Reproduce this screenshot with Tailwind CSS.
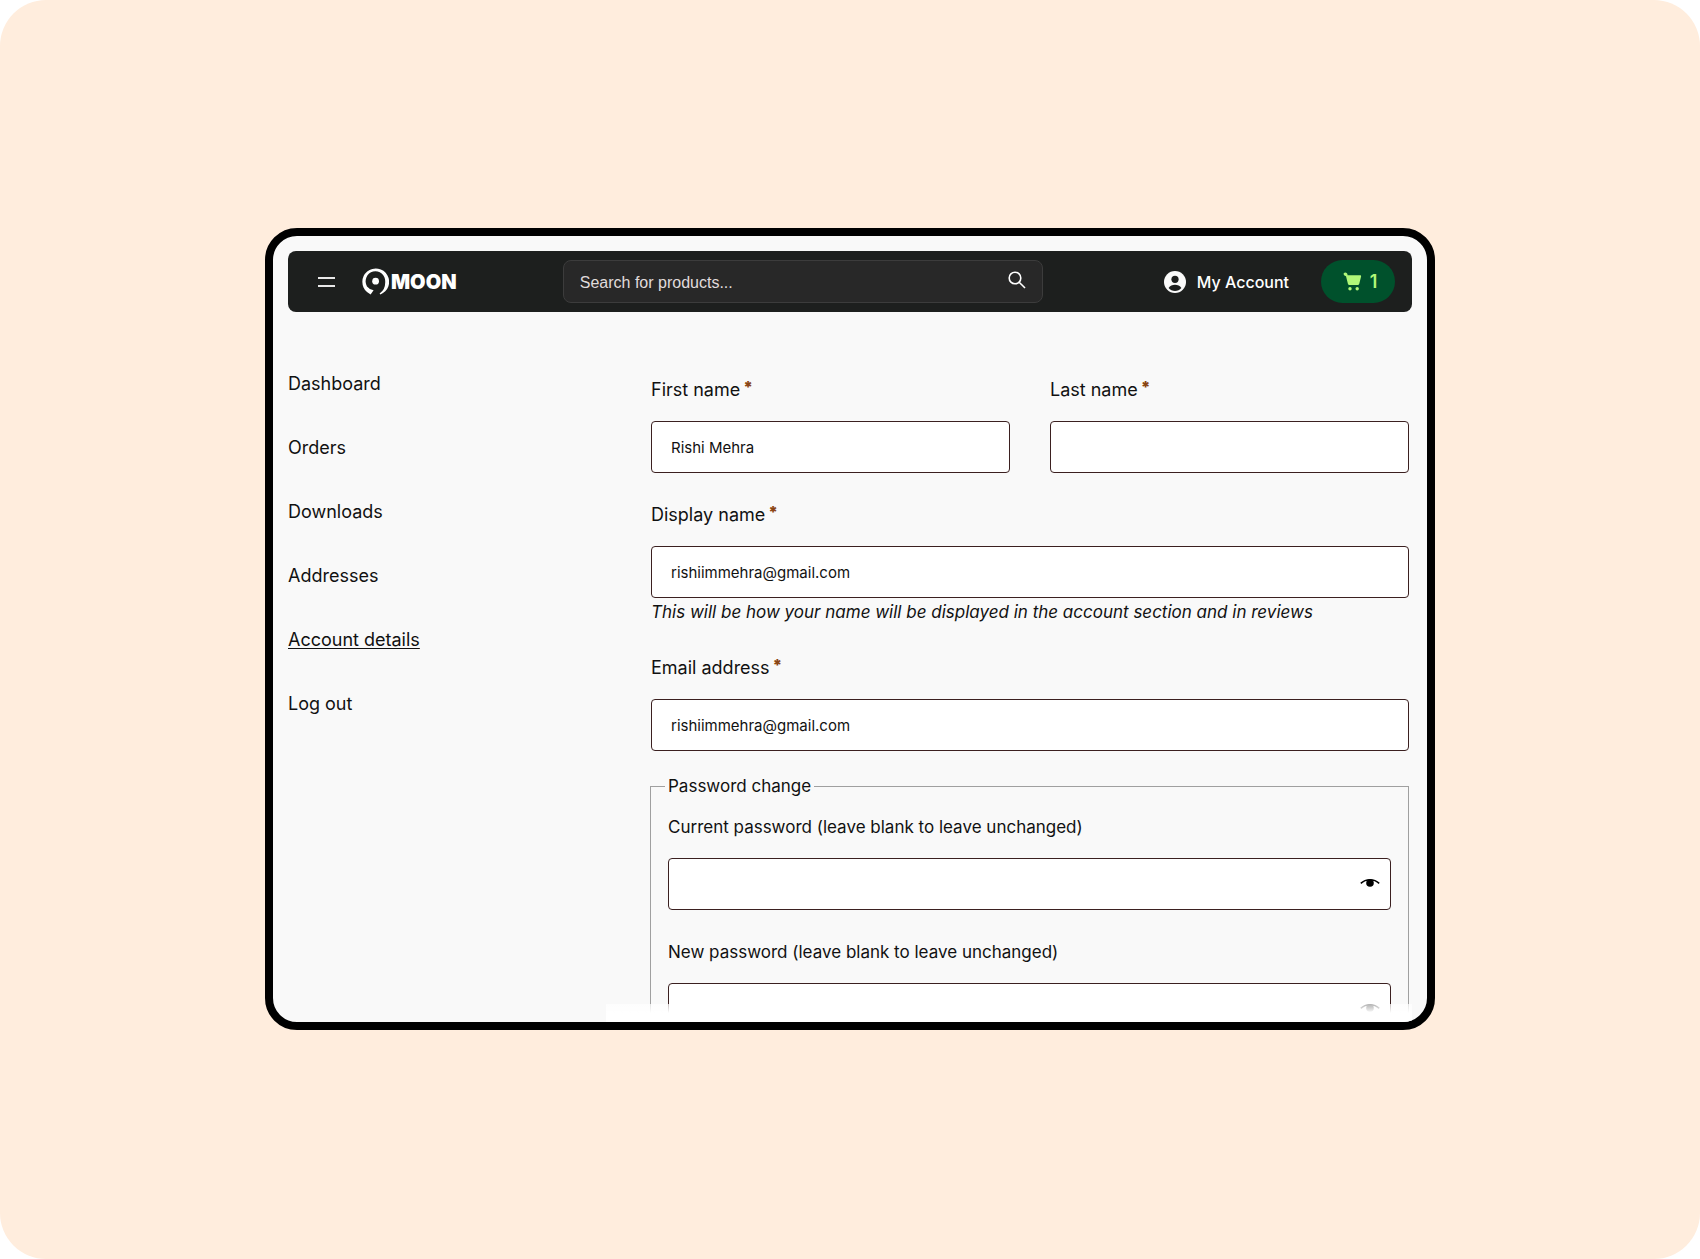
<!DOCTYPE html>
<html lang="en">
<head>
    <meta charset="UTF-8">
    <meta name="viewport" content="width=device-width, initial-scale=1.0">
    <title>Account details - Moon</title>
    <script src="https://cdn.jsdelivr.net/npm/@tailwindcss/browser@4"></script>
</head>
<body class="bg-white font-['Inter',sans-serif] text-[#111]">
    <div class="min-h-screen flex items-center justify-center bg-[#ffeddd] rounded-[46px] px-8 pb-px">

        <!-- Device frame -->
        <div class="relative w-full max-w-[1170px] aspect-[1170/802] bg-[#f9f9f9] border-8 border-black rounded-[32px] overflow-hidden p-[15px]">

            <!-- Header -->
            <header class="h-[61px] bg-[#1d1f1e] rounded-lg flex items-center pl-[30px] pr-[17px] text-white">
                <button type="button" aria-label="Menu" class="flex flex-col gap-[6px] w-[17px]">
                    <span class="h-[2px] bg-[#e8e8e8]"></span>
                    <span class="h-[2px] bg-[#e8e8e8]"></span>
                </button>
                <a href="#" class="ml-[27px] flex items-center gap-[2px]">
                    <svg class="w-[27px] h-[27px]" viewBox="0 0 27 27" fill="white">
                        <path d="M8.6 26.6 L5 24 A13.4 13.4 0 1 1 18.4 26.4 L17.6 25.6 Q23.4 21.4 23.2 14 A9.8 10.2 0 1 0 5 18.6 Q7 21.4 11.6 22.2 Z"/>
                        <circle cx="13.6" cy="13.2" r="3.4"/>
                    </svg>
                    <span class="text-xl leading-6 font-black">MOON</span>
                </a>

                <form role="search" class="ml-auto flex-1 max-w-[480px] h-[43px] flex items-center bg-[#282828] border border-[#3c3c3c] rounded-lg px-4">
                    <input type="search" aria-label="Search for products" placeholder="Search for products..." class="flex-1 min-w-0 pt-[2px] bg-transparent outline-none font-['Liberation_Sans',sans-serif] text-base placeholder:text-[#e0dcdc]">
                    <button type="submit" aria-label="Search" class="pb-1">
                        <svg class="w-[18px] h-[18px]" viewBox="0 0 18 18" fill="none" stroke="white" stroke-width="1.6">
                            <circle cx="7" cy="7" r="5.8"/>
                            <path d="M11.2 11.2 L17 17"/>
                        </svg>
                    </button>
                </form>

                <a href="#" class="ml-[121px] flex items-center gap-[11px] text-base font-medium">
                    <svg class="w-[22px] h-[22px]" viewBox="0 0 22 22">
                        <circle cx="11" cy="11" r="11" fill="#fafafa"/>
                        <circle cx="11" cy="8.3" r="3.6" fill="#1d1f1e"/>
                        <path d="M4.6 16.9 C6 14.6 8.4 13.8 11 13.8 C13.6 13.8 16 14.6 17.4 16.9 C15.8 18.8 13.5 19.9 11 19.9 C8.5 19.9 6.2 18.8 4.6 16.9 Z" fill="#1d1f1e"/>
                    </svg>
                    My Account
                </a>
                <button type="button" aria-label="Cart, 1 item" class="ml-8 w-[74px] h-[43px] pl-1 flex items-center justify-center gap-2 rounded-full bg-[#00512c] text-[#b0f878] text-lg font-semibold">
                    <svg class="w-[19px] h-[19px]" viewBox="0 0 19 19" fill="currentColor">
                        <path d="M0.5 2 Q0.6 0.4 2.2 0.4 Q4.4 0.4 4.6 3.2 L17.2 3.2 Q18.4 3.2 18.1 4.4 L16.2 12 Q15.9 13 14.8 13 L6.4 13 Q5.2 13 4.9 11.8 L3 4.2 Q1 4 0.5 2 Z"/>
                        <circle cx="7" cy="16.8" r="1.7"/>
                        <circle cx="14.2" cy="16.8" r="1.7"/>
                    </svg>
                    1
                </button>
            </header>

            <div class="flex text-lg leading-7">
                <!-- Account navigation -->
                <nav class="w-[363px] shrink-0 pt-[58px]">
                    <ul class="flex flex-col gap-9">
                        <li><a href="#">Dashboard</a></li>
                        <li><a href="#">Orders</a></li>
                        <li><a href="#">Downloads</a></li>
                        <li><a href="#">Addresses</a></li>
                        <li><a href="#" class="underline underline-offset-2 decoration-1" aria-current="page">Account details</a></li>
                        <li><a href="#">Log out</a></li>
                    </ul>
                </nav>

                <!-- Account form -->
                <form class="flex-1 min-w-0 pt-16 pr-[3px] flex flex-col">
                    <div class="grid grid-cols-2 gap-x-10 gap-y-7">
                        <div class="flex flex-col gap-[17px]">
                            <label for="first_name">First name<span class="ml-[3px] align-text-top text-base leading-none text-[#8a4513] font-black">*</span></label>
                            <input id="first_name" type="text" value="Rishi Mehra" class="w-full h-[52px] bg-white border border-[#3b2020] rounded-[4px] px-[19px] text-[15px]">
                        </div>
                        <div class="flex flex-col gap-[17px]">
                            <label for="last_name">Last name<span class="ml-[3px] align-text-top text-base leading-none text-[#8a4513] font-black">*</span></label>
                            <input id="last_name" type="text" class="w-full h-[52px] bg-white border border-[#3b2020] rounded-[4px] px-[19px] text-[15px]">
                        </div>
                        <div class="col-span-2 flex flex-col">
                            <label for="display_name" class="mb-[17px]">Display name<span class="ml-[3px] align-text-top text-base leading-none text-[#8a4513] font-black">*</span></label>
                            <input id="display_name" type="text" value="rishiimmehra@gmail.com" class="w-full h-[52px] bg-white border border-[#3b2020] rounded-[4px] px-[19px] text-[15px]">
                            <em class="whitespace-nowrap text-[17px] leading-7">This will be how your name will be displayed in the account section and in reviews</em>
                        </div>
                        <div class="col-span-2 flex flex-col gap-[17px]">
                            <label for="email">Email address<span class="ml-[3px] align-text-top text-base leading-none text-[#8a4513] font-black">*</span></label>
                            <input id="email" type="email" value="rishiimmehra@gmail.com" class="w-full h-[52px] bg-white border border-[#3b2020] rounded-[4px] px-[19px] text-[15px]">
                        </div>
                    </div>

                    <fieldset class="mt-[21px] -ml-px border border-[#a0a0a0] px-[17px] pt-[13px] pb-6 text-[17px] leading-7">
                        <legend class="-ml-[3px] px-[3px]">Password change</legend>
                        <div class="flex flex-col gap-7">
                            <div class="flex flex-col gap-[17px]">
                                <label for="current_password">Current password (leave blank to leave unchanged)</label>
                                <div class="relative">
                                    <input id="current_password" type="password" class="w-full h-[52px] bg-white border border-[#3b2020] rounded-[4px] pl-[19px] pr-12 text-[15px]">
                                    <button type="button" aria-label="Show password" class="absolute right-[11px] top-5">
                                        <svg class="w-5 h-[10px]" viewBox="0 0 20 10">
                                            <path d="M0.8 5.4 C3.5 2.8 6.5 1.7 10 1.7 C13.5 1.7 16.5 2.8 19.2 5.4" fill="none" stroke="black" stroke-width="1.5"/>
                                            <circle cx="10" cy="5" r="3.8" fill="black"/>
                                        </svg>
                                    </button>
                                </div>
                            </div>
                            <div class="flex flex-col gap-[17px]">
                                <label for="new_password">New password (leave blank to leave unchanged)</label>
                                <div class="relative">
                                    <input id="new_password" type="password" class="w-full h-[52px] bg-white border border-[#3b2020] rounded-[4px] pl-[19px] pr-12 text-[15px]">
                                    <button type="button" aria-label="Show password" class="absolute right-[11px] top-5">
                                        <svg class="w-5 h-[10px]" viewBox="0 0 20 10">
                                            <path d="M0.8 5.4 C3.5 2.8 6.5 1.7 10 1.7 C13.5 1.7 16.5 2.8 19.2 5.4" fill="none" stroke="black" stroke-width="1.5"/>
                                            <circle cx="10" cy="5" r="3.8" fill="black"/>
                                        </svg>
                                    </button>
                                </div>
                            </div>
                        </div>
                    </fieldset>
                </form>
            </div>

            <!-- Bottom fade over the form -->
            <div class="absolute bottom-0 left-[333px] right-[15px] h-[18px] bg-linear-to-b from-white/70 to-white to-50%"></div>
        </div>
    </div>
</body>
</html>
